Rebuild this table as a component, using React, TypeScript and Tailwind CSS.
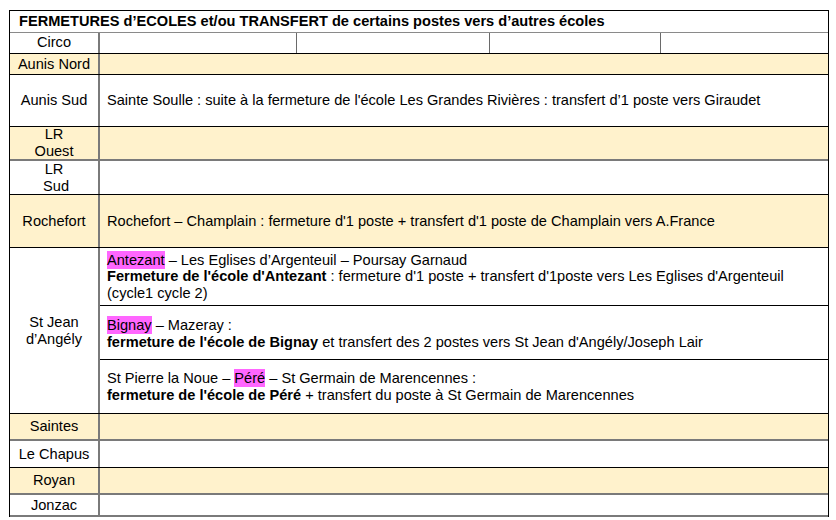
const font = { fontFamily: '"Liberation Sans", Arial, sans-serif' };

type RowProps = {
  label: React.ReactNode;
  beige?: boolean;
  h: string;
  line: string;
  children?: React.ReactNode;
};

function Row({ label, beige, h, line, children }: RowProps) {
  return (
    <div className={`flex ${h} ${line} ${beige ? 'bg-[#fff2cc]' : 'bg-white'}`}>
      <div className="flex w-[90px] shrink-0 items-center justify-center border-r-2 border-[#7a7a7a] text-center leading-[17px]">
        {label}
      </div>
      <div className="flex flex-1 flex-col justify-center pl-[7px] leading-[16.5px]">{children}</div>
    </div>
  );
}

function Hl({ children }: { children: React.ReactNode }) {
  return <span className="bg-[#ff66ff] py-px">{children}</span>;
}

export default function App() {
  return (
    <div className="min-h-[520px] bg-white pt-[10px] pl-[9px] text-[14.6px] text-black" style={font}>
      <div className="w-[820px] border border-b-0 border-black">
        <div className="flex h-[22px] items-center border-b border-[#8a8a8a] pl-[9px] text-[14.6px] font-bold">
          FERMETURES d’ECOLES et/ou TRANSFERT de certains postes vers d’autres écoles
        </div>
        <div className="flex h-[21px] border-b border-black">
          <div className="flex w-[90px] shrink-0 items-center justify-center border-r-2 border-[#7a7a7a]">Circo</div>
          <div className="w-[197px] border-r border-[#6a6a6a]" />
          <div className="w-[193px] border-r border-[#6a6a6a]" />
          <div className="w-[171px] border-r border-[#6a6a6a]" />
          <div className="flex-1" />
        </div>
        <Row label="Aunis Nord" beige h="h-[21px]" line="border-b border-black" />
        <Row label="Aunis Sud" h="h-[52px]" line="border-b border-black">
          <p>Sainte Soulle : suite à la fermeture de l'école Les Grandes Rivières : transfert d’1 poste vers Giraudet</p>
        </Row>
        <Row label={<span>LR<br />Ouest</span>} beige h="h-[34px]" line="border-b-2 border-[#7a7a7a]" />
        <Row label={<span>LR<br />&nbsp;Sud</span>} h="h-[34px]" line="border-b border-black" />
        <Row label="Rochefort" beige h="h-[53px]" line="border-b border-black">
          <p>Rochefort – Champlain : fermeture d'1 poste + transfert d'1 poste de Champlain vers A.France</p>
        </Row>
        <div className="flex h-[166px] border-b border-black">
          <div className="flex w-[90px] shrink-0 items-center justify-center border-r-2 border-[#7a7a7a] text-center leading-[17px]">
            <span>St Jean<br />d’Angély</span>
          </div>
          <div className="flex flex-1 flex-col leading-[16.5px]">
            <div className="flex h-[58px] flex-col justify-center border-b border-black pl-[7px]">
              <p><Hl>Antezant</Hl> – Les Eglises d’Argenteuil – Poursay Garnaud</p>
              <p><b>Fermeture de l'école d'Antezant</b> : fermeture d'1 poste + transfert d'1poste vers Les Eglises d'Argenteuil</p>
              <p>(cycle1 cycle 2)</p>
            </div>
            <div className="flex h-[54px] flex-col justify-center border-b border-black pl-[7px] pt-[2px]">
              <p><Hl>Bignay</Hl> – Mazeray :</p>
              <p><b>fermeture de l'école de Bignay</b> et transfert des 2 postes vers St Jean d'Angély/Joseph Lair</p>
            </div>
            <div className="flex flex-1 flex-col justify-center pl-[7px]">
              <p>St Pierre la Noue – <Hl>Péré</Hl> – St Germain de Marencennes :</p>
              <p><b>fermeture de l'école de Péré</b> + transfert du poste à St Germain de Marencennes</p>
            </div>
          </div>
        </div>
        <Row label="Saintes" beige h="h-[27px]" line="border-b-2 border-[#7a7a7a]" />
        <Row label="Le Chapus" h="h-[27px]" line="border-b border-black" />
        <Row label="Royan" beige h="h-[27px]" line="border-b-2 border-[#7a7a7a]" />
        <Row label="Jonzac" h="h-[22px]" line="border-b-2 border-[#7a7a7a]" />
      </div>
    </div>
  );
}
